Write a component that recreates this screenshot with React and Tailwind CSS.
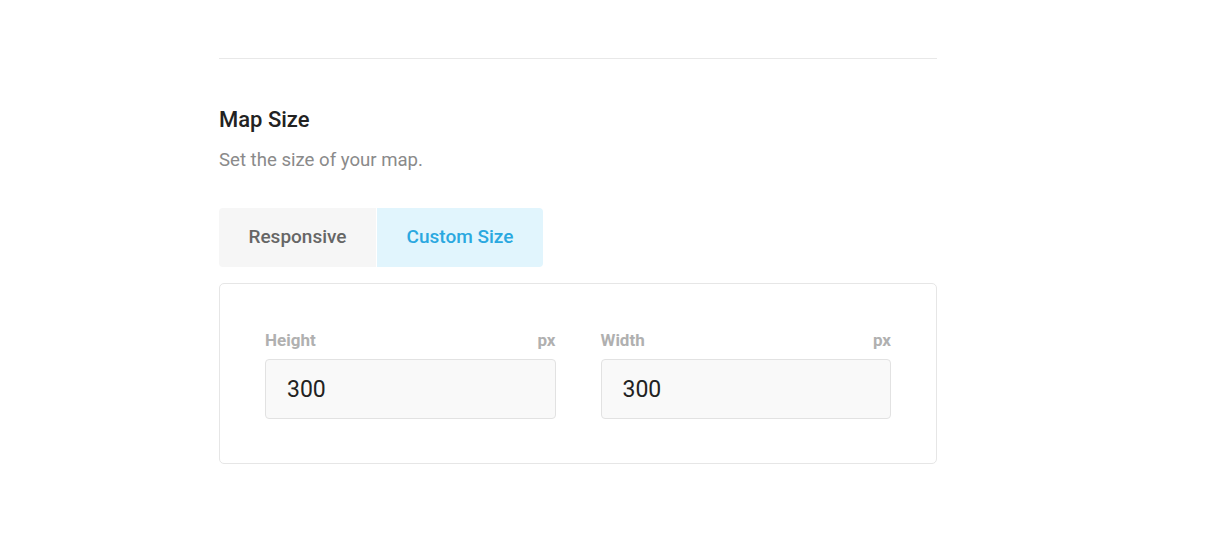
export default function App() {
  const fields = [
    { label: "Height", value: "300" },
    { label: "Width", value: "300" },
  ];
  return (
    <div
      className="min-h-[543px] w-full bg-white"
      style={{ fontFamily: "Roboto, 'Liberation Sans', sans-serif" }}
    >
      <div className="ml-[219px] w-[718px] pt-[58px]">
        <div className="h-px bg-[#e8e8e8]" />
        <h2 className="mt-[47px] text-[22px] font-medium leading-[28px] text-[#222]">Map Size</h2>
        <p className="mt-[15px] text-[18.6px] leading-[22px] text-[#8a8a8a]">Set the size of your map.</p>

        <div className="mt-[37px] flex w-fit overflow-hidden rounded-[4px]">
          <button className="flex h-[59px] w-[157px] items-center justify-center bg-[#f6f6f6] text-[19px] font-medium text-[#666]">
            Responsive
          </button>
          <div className="w-px bg-white" />
          <button className="flex h-[59px] w-[166px] items-center justify-center bg-[#e1f5fd] text-[19px] font-medium text-[#2aa8e0]">
            Custom Size
          </button>
        </div>

        <div className="mt-[16px] grid grid-cols-2 gap-[45px] rounded-[5px] border border-[#e6e6e6] px-[45px] pt-[45px] pb-[44px]">
          {fields.map((f) => (
            <div key={f.label}>
              <div className="flex items-center justify-between text-[17px] font-bold leading-[22px] text-[#b0b0b0]">
                <span>{f.label}</span>
                <span>px</span>
              </div>
              <div className="mt-[8px] flex h-[60px] items-center rounded-[4px] border border-[#e2e2e2] bg-[#f9f9f9] px-[21px] pt-[2px] text-[23px] text-[#222]">
                {f.value}
              </div>
            </div>
          ))}
        </div>
      </div>
    </div>
  );
}
